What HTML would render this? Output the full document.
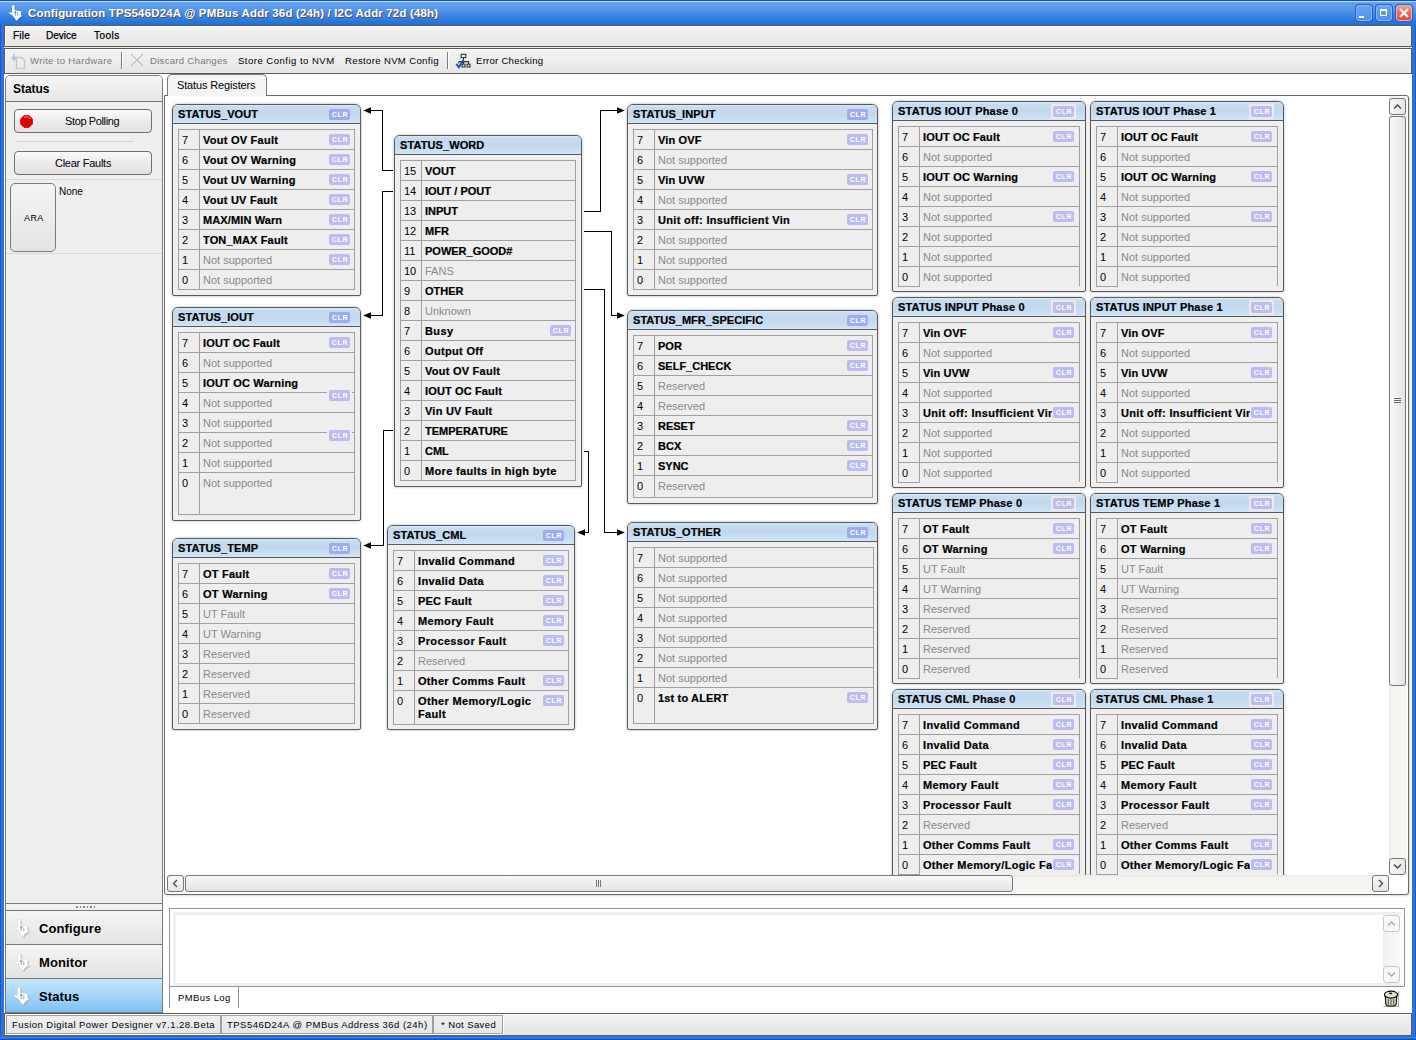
<!DOCTYPE html><html><head><meta charset="utf-8"><title>Configuration</title><style>
*{box-sizing:border-box;margin:0;padding:0}
html,body{width:1416px;height:1040px;overflow:hidden;background:#fff;font-family:"Liberation Sans", sans-serif;}
body div{position:absolute}
.t{white-space:nowrap;font-size:11px;line-height:13px;color:#000}
.pn{border:1px solid #5a5a5a;border-radius:6px 6px 2px 2px;background:#efefef;box-shadow:0 0 3px rgba(0,0,0,0.3)}
.ph{left:0;top:0;height:19px;border-bottom:1px solid #5a5a5a;border-radius:5px 5px 0 0;background:linear-gradient(#d6ebfb 0px,#c7dcf0 2px,#c2d8ed 9px,#cde2f3 17px,#d6ebfb 18px)}
.pt{white-space:nowrap;font-size:11px;font-weight:bold;line-height:13px;letter-spacing:0.25px;color:#000;-webkit-text-stroke:0.2px #000}
.tb{border:1px solid #a0a0a0;background:#eeeeee}
.hl{height:1px;background:#a0a0a0}
.vl{width:1px;background:#a0a0a0}
.num{left:3px;width:16px;height:20px;font-size:11px;line-height:21px;color:#000;white-space:nowrap}
.lb{left:24px;height:20px;font-size:11px;line-height:21px;font-weight:bold;letter-spacing:0.3px;color:#000;white-space:nowrap;overflow:hidden;-webkit-text-stroke:0.2px #000}
.lg{left:24px;height:20px;font-size:11px;line-height:21px;color:#8a8a8a;white-space:nowrap;overflow:hidden}
.clr{width:21px;height:11px;border-radius:2px;background:#bcbcf0;color:#fff;font-size:7px;line-height:11px;text-align:center;letter-spacing:0.75px;padding-left:1px;font-weight:bold}
.hclr{background:#9cacef}
.pclr{background:#bcbcf0}
.hbox{width:25px;height:15px;background:#eeebe6}
.cl{background:#000}
</style></head><body>
<div style="left:0px;top:0px;width:1416px;height:25px;background:linear-gradient(#0b53b8 0px,#0b53b8 1px,#bcd9fa 1px,#bcd9fa 2px,#6aa5ee 2px,#62a0ec 3px,#5a9aea 8px,#4a8ee6 12px,#3280e0 18px,#2677db 22px,#2070d8 25px)"></div>
<svg style="position:absolute;left:8px;top:5px" width="16" height="17" viewBox="0 0 18 19"><path d="M4.5 0.5H7.5V5.5L10 6.3L12.5 6.6L14.8 7.2V11.2L15.8 12.3L13 14.2L10.8 16.2V17.8L8.8 16.8L6.8 13.6L4.8 11.4L2.6 10.4L0.6 8.3H4.5Z" transform="translate(1,1)" fill="#1b4fa8" opacity="0.6"/><path d="M4.5 0.5H7.5V5.5L10 6.3L12.5 6.6L14.8 7.2V11.2L15.8 12.3L13 14.2L10.8 16.2V17.8L8.8 16.8L6.8 13.6L4.8 11.4L2.6 10.4L0.6 8.3H4.5Z" fill="#fff"/><path d="M8.2 6.5v5.5M6.8 8h3M10.8 8.5v3.5" stroke="#4a88e0" stroke-width="1" fill="none"/></svg>
<div class="t" style="left:28px;top:6px;font-size:11.5px;font-weight:bold;letter-spacing:0.154px;color:#fff;line-height:14px;text-shadow:1px 1px 0 #5a4a3a">Configuration TPS546D24A @ PMBus Addr 36d (24h) / I2C Addr 72d (48h)</div>
<div style="left:1356px;top:5px;width:16px;height:16px;border-radius:3px;border:1px solid #8ab6f2;background:linear-gradient(#6aa6f0,#4f90e8);box-shadow:0 0 0 1px #2060d0"></div>
<div style="left:1376px;top:5px;width:16px;height:16px;border-radius:3px;border:1px solid #8ab6f2;background:linear-gradient(#6aa6f0,#4f90e8);box-shadow:0 0 0 1px #2060d0"></div>
<div style="left:1359px;top:16px;width:5px;height:2px;background:#fff"></div>
<div style="left:1380px;top:9px;width:7px;height:7px;border:1px solid #fff;border-top-width:2px"></div>
<div style="left:1396px;top:5px;width:16px;height:16px;border-radius:3px;border:1px solid #f4b0a4;background:linear-gradient(#f49a8c,#ec6858 50%,#e4463a);box-shadow:0 0 0 1px #2060d0"></div>
<svg style="position:absolute;left:1399px;top:8px" width="10" height="10" viewBox="0 0 10 10"><path d="M1 1L9 9M9 1L1 9" stroke="#fff" stroke-width="2.2"/></svg>
<div style="left:0px;top:25px;width:4px;height:1015px;background:linear-gradient(90deg,#0b3fa8 0px,#2f74dc 1px,#2a6fdb 4px)"></div>
<div style="left:1412px;top:25px;width:4px;height:1015px;background:linear-gradient(90deg,#2a6fdb 0px,#2f74dc 3px,#0b3fa8 4px)"></div>
<div style="left:0px;top:1036px;width:1416px;height:4px;background:linear-gradient(#1f6ad8,#3a84e6 2px,#1a5cc8 3px,#0b3fa8 4px)"></div>
<div style="left:4px;top:25px;width:1408px;height:1010px;background:#efeadc"></div>
<div style="left:4px;top:25px;width:1408px;height:22px;background:linear-gradient(#f4f4f4,#e6e6e6);border:1px solid #5f5b52;box-shadow:inset 1px 1px 0 #fff"></div>
<div class="t" style="left:13px;top:29px;font-size:10px;letter-spacing:0.197px;line-height:13px;-webkit-text-stroke:0.25px #000">File</div>
<div class="t" style="left:46px;top:29px;font-size:10px;letter-spacing:-0.013px;line-height:13px;-webkit-text-stroke:0.25px #000">Device</div>
<div class="t" style="left:94px;top:29px;font-size:10px;letter-spacing:0.489px;line-height:13px;-webkit-text-stroke:0.25px #000">Tools</div>
<div style="left:4px;top:48px;width:1408px;height:26px;background:linear-gradient(#f4f4f4,#e6e6e6);border:1px solid #5f5b52;box-shadow:inset 1px 1px 0 #fff"></div>
<svg style="position:absolute;left:11px;top:53px" width="16" height="16" viewBox="0 0 16 16"><path d="M5.5 4.5h5l3 3v8h-8z" fill="none" stroke="#c8c8c8" stroke-width="1.5"/><path d="M3 1v5M1 4l2 3 2-3" stroke="#a8c8e8" stroke-width="1.6" fill="none"/></svg>
<div class="t" style="left:30px;top:54px;font-size:9.6px;letter-spacing:0.308px;color:#7a7a7a">Write to Hardware</div>
<div style="left:121px;top:52px;width:1px;height:17px;background:#808080;border-right:1px solid #fff;width:2px"></div>
<svg style="position:absolute;left:130px;top:53px" width="14" height="14" viewBox="0 0 14 14"><path d="M1 1L13 13M13 1L1 13" stroke="#c4c4c4" stroke-width="1.4"/></svg>
<div class="t" style="left:150px;top:54px;font-size:9.6px;letter-spacing:0.270px;color:#7a7a7a">Discard Changes</div>
<div class="t" style="left:238px;top:54px;font-size:9.6px;letter-spacing:0.458px;color:#000">Store Config to NVM</div>
<div class="t" style="left:345px;top:54px;font-size:9.6px;letter-spacing:0.328px;color:#000">Restore NVM Config</div>
<div style="left:447px;top:52px;width:2px;height:17px;background:#808080;border-right:1px solid #fff"></div>
<svg style="position:absolute;left:455px;top:53px" width="16" height="16" viewBox="0 0 16 16"><rect x="6.2" y="1.3" width="4.6" height="3.3" fill="none" stroke="#333" stroke-width="1.1"/><path d="M8.5 4.6V7.5M3.8 8.6H13.6M3.8 8.6V10.5M8.5 8.6V11M13.6 8.6V11" stroke="#333" stroke-width="1.1" fill="none"/><rect x="7" y="11.2" width="3" height="2.8" fill="none" stroke="#333" stroke-width="1.1"/><rect x="12.1" y="11.2" width="3" height="2.8" fill="none" stroke="#333" stroke-width="1.1"/><path d="M1.3 10.8L3.9 14.2L8.3 7.3" stroke="#1a56b4" stroke-width="2" fill="none"/></svg>
<div class="t" style="left:476px;top:54px;font-size:9.6px;letter-spacing:0.237px;color:#000">Error Checking</div>
<div style="left:4px;top:74px;width:1408px;height:961px;background:#fff"></div>
<div style="left:5px;top:75px;width:158px;height:829px;background:#efefef;border:1px solid #7a7a7a;border-radius:5px 5px 0 0"></div>
<div style="left:6px;top:76px;width:156px;height:26px;background:linear-gradient(#f6f6f6,#e6e6e6);border-bottom:1px solid #7a7a7a;border-radius:4px 4px 0 0"></div>
<div class="t" style="left:13px;top:82px;font-size:12px;font-weight:bold;letter-spacing:-0.054px;line-height:14px">Status</div>
<div style="left:14px;top:109px;width:138px;height:24px;border:1px solid #707070;border-radius:4px;background:linear-gradient(#fafafa,#ececec 50%,#e2e2e2)"></div>
<svg style="position:absolute;left:20px;top:115px" width="13" height="13" viewBox="0 0 13 13"><path d="M4 0.5h5l3.5 3.5v5l-3.5 3.5h-5l-3.5-3.5v-5z" fill="#e00000" stroke="#900" stroke-width="0.6"/><path d="M4 2h4l2 2" stroke="#ff8080" stroke-width="1" fill="none"/></svg>
<div class="t" style="left:65px;top:115px;font-size:11px;letter-spacing:-0.377px;">Stop Polling</div>
<div style="left:16px;top:141px;width:118px;height:1px;background:#d4d4d4"></div>
<div style="left:14px;top:151px;width:138px;height:24px;border:1px solid #707070;border-radius:4px;background:linear-gradient(#fafafa,#ececec 50%,#e2e2e2)"></div>
<div class="t" style="left:55px;top:157px;font-size:11px;letter-spacing:-0.265px;">Clear Faults</div>
<div style="left:6px;top:179px;width:156px;height:1px;background:#d8d8d8"></div>
<div style="left:10px;top:183px;width:46px;height:69px;border:1px solid #7a7a7a;border-radius:5px;background:linear-gradient(#f4f4f4,#e4e4e4)"></div>
<div class="t" style="left:24px;top:212px;font-size:9px;letter-spacing:0.400px;line-height:12px">ARA</div>
<div class="t" style="left:59px;top:186px;font-size:10px;letter-spacing:-0.069px;line-height:12px">None</div>
<div style="left:6px;top:253px;width:156px;height:1px;background:#d8d8d8"></div>
<div style="left:5px;top:903px;width:158px;height:8px;background:linear-gradient(#f4f2ea,#eeeeee);border:1px solid #7a7a7a"></div>
<div style="left:76.0px;top:906px;width:1.5px;height:1.5px;background:#8a8a8a"></div>
<div style="left:79.5px;top:906px;width:1.5px;height:1.5px;background:#8a8a8a"></div>
<div style="left:83.0px;top:906px;width:1.5px;height:1.5px;background:#8a8a8a"></div>
<div style="left:86.5px;top:906px;width:1.5px;height:1.5px;background:#8a8a8a"></div>
<div style="left:90.0px;top:906px;width:1.5px;height:1.5px;background:#8a8a8a"></div>
<div style="left:93.5px;top:906px;width:1.5px;height:1.5px;background:#8a8a8a"></div>
<div style="left:5px;top:911px;width:158px;height:34px;background:linear-gradient(#f4f4f4,#e4e4e4);border-left:1px solid #7a7a7a;border-right:1px solid #7a7a7a;border-bottom:1px solid #7a7a7a"></div>
<svg style="position:absolute;left:13px;top:919px" width="18" height="19" viewBox="0 0 18 19"><path d="M4.5 0.5H7.5V5.5L10 6.3L12.5 6.6L14.8 7.2V11.2L15.8 12.3L13 14.2L10.8 16.2V17.8L8.8 16.8L6.8 13.6L4.8 11.4L2.6 10.4L0.6 8.3H4.5Z" transform="translate(1.2,1.2)" fill="#9a9a9a" opacity="0.55"/><path d="M4.5 0.5H7.5V5.5L10 6.3L12.5 6.6L14.8 7.2V11.2L15.8 12.3L13 14.2L10.8 16.2V17.8L8.8 16.8L6.8 13.6L4.8 11.4L2.6 10.4L0.6 8.3H4.5Z" fill="#fff" stroke="#d0d0d0" stroke-width="0.5"/><path d="M8.2 6.5v5.5M6.8 8h3M10.8 8.5v3.5" stroke="#8a8f96" stroke-width="0.9" fill="none"/></svg>
<div class="t" style="left:39px;top:921px;font-size:13px;font-weight:bold;line-height:15px;letter-spacing:0.1px">Configure</div>
<div style="left:5px;top:945px;width:158px;height:34px;background:linear-gradient(#f4f4f4,#e4e4e4);border-left:1px solid #7a7a7a;border-right:1px solid #7a7a7a;border-bottom:1px solid #7a7a7a"></div>
<svg style="position:absolute;left:13px;top:953px" width="18" height="19" viewBox="0 0 18 19"><path d="M4.5 0.5H7.5V5.5L10 6.3L12.5 6.6L14.8 7.2V11.2L15.8 12.3L13 14.2L10.8 16.2V17.8L8.8 16.8L6.8 13.6L4.8 11.4L2.6 10.4L0.6 8.3H4.5Z" transform="translate(1.2,1.2)" fill="#9a9a9a" opacity="0.55"/><path d="M4.5 0.5H7.5V5.5L10 6.3L12.5 6.6L14.8 7.2V11.2L15.8 12.3L13 14.2L10.8 16.2V17.8L8.8 16.8L6.8 13.6L4.8 11.4L2.6 10.4L0.6 8.3H4.5Z" fill="#fff" stroke="#d0d0d0" stroke-width="0.5"/><path d="M8.2 6.5v5.5M6.8 8h3M10.8 8.5v3.5" stroke="#8a8f96" stroke-width="0.9" fill="none"/></svg>
<div class="t" style="left:39px;top:955px;font-size:13px;font-weight:bold;line-height:15px;letter-spacing:0.1px">Monitor</div>
<div style="left:5px;top:979px;width:158px;height:34px;background:linear-gradient(#c4e6fb,#a5d5f8 50%,#7fc0f4);border-left:1px solid #7a7a7a;border-right:1px solid #7a7a7a;border-bottom:1px solid #7a7a7a"></div>
<svg style="position:absolute;left:13px;top:987px" width="18" height="19" viewBox="0 0 18 19"><path d="M4.5 0.5H7.5V5.5L10 6.3L12.5 6.6L14.8 7.2V11.2L15.8 12.3L13 14.2L10.8 16.2V17.8L8.8 16.8L6.8 13.6L4.8 11.4L2.6 10.4L0.6 8.3H4.5Z" transform="translate(1.2,1.2)" fill="#9a9a9a" opacity="0.55"/><path d="M4.5 0.5H7.5V5.5L10 6.3L12.5 6.6L14.8 7.2V11.2L15.8 12.3L13 14.2L10.8 16.2V17.8L8.8 16.8L6.8 13.6L4.8 11.4L2.6 10.4L0.6 8.3H4.5Z" fill="#fff" stroke="#d0d0d0" stroke-width="0.5"/><path d="M8.2 6.5v5.5M6.8 8h3M10.8 8.5v3.5" stroke="#8a8f96" stroke-width="0.9" fill="none"/></svg>
<div class="t" style="left:39px;top:989px;font-size:13px;font-weight:bold;line-height:15px;letter-spacing:0.1px">Status</div>
<div style="left:167px;top:74px;width:100px;height:22px;background:#f4f4f4;border:1px solid #7a7a7a;border-bottom:none;border-radius:5px 5px 0 0"></div>
<div class="t" style="left:177px;top:79px;font-size:11px;letter-spacing:-0.143px;">Status Registers</div>
<div style="left:266px;top:95px;width:1140px;height:1px;background:#6a6a6a"></div>
<div style="left:164px;top:95px;width:1245px;height:800px;border:1px solid #6a6a6a;border-radius:0 3px 3px 3px;background:#fff;box-shadow:1px 1px 2px rgba(0,0,0,0.15)"></div>
<div style="left:168px;top:94px;width:98px;height:2px;background:#f4f4f4"></div>
<div style="left:166px;top:96px;width:1223px;height:779px;overflow:hidden;background:#fff">
<div class="pn" style="left:6px;top:8px;width:189px;height:192px">
<div class="ph" style="width:187px"></div>
<div class="pt" style="left:5px;top:3px;letter-spacing:0.100px">STATUS_VOUT</div>
<div class="clr hclr" style="left:156px;top:4px">CLR</div>
<div class="tb" style="left:5px;top:24px;width:177px;height:161px;">
<div class="num" style="top:0px">7</div>
<div class="lb" style="top:0px;width:124px;letter-spacing:0.245px;">Vout OV Fault</div>
<div class="clr" style="left:150px;top:4px">CLR</div>
<div class="hl" style="left:0;top:19px;width:175px"></div>
<div class="num" style="top:20px">6</div>
<div class="lb" style="top:20px;width:124px;letter-spacing:0.270px;">Vout OV Warning</div>
<div class="clr" style="left:150px;top:24px">CLR</div>
<div class="hl" style="left:0;top:39px;width:175px"></div>
<div class="num" style="top:40px">5</div>
<div class="lb" style="top:40px;width:124px;letter-spacing:0.270px;">Vout UV Warning</div>
<div class="clr" style="left:150px;top:44px">CLR</div>
<div class="hl" style="left:0;top:59px;width:175px"></div>
<div class="num" style="top:60px">4</div>
<div class="lb" style="top:60px;width:124px;letter-spacing:0.245px;">Vout UV Fault</div>
<div class="clr" style="left:150px;top:64px">CLR</div>
<div class="hl" style="left:0;top:79px;width:175px"></div>
<div class="num" style="top:80px">3</div>
<div class="lb" style="top:80px;width:124px;letter-spacing:0.115px;">MAX/MIN Warn</div>
<div class="clr" style="left:150px;top:84px">CLR</div>
<div class="hl" style="left:0;top:99px;width:175px"></div>
<div class="num" style="top:100px">2</div>
<div class="lb" style="top:100px;width:124px;letter-spacing:0.140px;">TON_MAX Fault</div>
<div class="clr" style="left:150px;top:104px">CLR</div>
<div class="hl" style="left:0;top:119px;width:175px"></div>
<div class="num" style="top:120px">1</div>
<div class="lg" style="top:120px;width:124px;">Not supported</div>
<div class="clr" style="left:150px;top:124px">CLR</div>
<div class="hl" style="left:0;top:139px;width:175px"></div>
<div class="num" style="top:140px">0</div>
<div class="lg" style="top:140px;width:150px;">Not supported</div>
<div class="vl" style="left:20px;top:0;height:159px"></div>
</div>
</div>
<div class="pn" style="left:6px;top:211px;width:189px;height:214px">
<div class="ph" style="width:187px"></div>
<div class="pt" style="left:5px;top:3px;letter-spacing:0.100px">STATUS_IOUT</div>
<div class="clr hclr" style="left:156px;top:4px">CLR</div>
<div class="tb" style="left:5px;top:24px;width:177px;height:183px;">
<div class="num" style="top:0px">7</div>
<div class="lb" style="top:0px;width:124px;letter-spacing:0.140px;">IOUT OC Fault</div>
<div class="clr" style="left:150px;top:4px">CLR</div>
<div class="hl" style="left:0;top:19px;width:175px"></div>
<div class="num" style="top:20px">6</div>
<div class="lg" style="top:20px;width:150px;">Not supported</div>
<div class="hl" style="left:0;top:39px;width:175px"></div>
<div class="num" style="top:40px">5</div>
<div class="lb" style="top:40px;width:150px;letter-spacing:0.180px;">IOUT OC Warning</div>
<div class="hl" style="left:0;top:59px;width:175px"></div>
<div class="num" style="top:60px">4</div>
<div class="lg" style="top:60px;width:150px;">Not supported</div>
<div class="hl" style="left:0;top:79px;width:175px"></div>
<div class="num" style="top:80px">3</div>
<div class="lg" style="top:80px;width:150px;">Not supported</div>
<div class="hl" style="left:0;top:99px;width:175px"></div>
<div class="num" style="top:100px">2</div>
<div class="lg" style="top:100px;width:150px;">Not supported</div>
<div class="hl" style="left:0;top:119px;width:175px"></div>
<div class="num" style="top:120px">1</div>
<div class="lg" style="top:120px;width:150px;">Not supported</div>
<div class="hl" style="left:0;top:139px;width:175px"></div>
<div class="num" style="top:140px">0</div>
<div class="lg" style="top:140px;width:150px;">Not supported</div>
<div class="vl" style="left:20px;top:0;height:181px"></div>
<div style="position:absolute;left:148px;top:57px;width:25px;height:5px;background:#eeeeee"></div>
<div class="clr" style="left:150px;top:57px">CLR</div>
<div style="position:absolute;left:148px;top:97px;width:25px;height:5px;background:#eeeeee"></div>
<div class="clr" style="left:150px;top:97px">CLR</div>
</div>
</div>
<div class="pn" style="left:6px;top:442px;width:189px;height:192px">
<div class="ph" style="width:187px"></div>
<div class="pt" style="left:5px;top:3px;letter-spacing:0.100px">STATUS_TEMP</div>
<div class="clr hclr" style="left:156px;top:4px">CLR</div>
<div class="tb" style="left:5px;top:24px;width:177px;height:161px;">
<div class="num" style="top:0px">7</div>
<div class="lb" style="top:0px;width:124px;letter-spacing:0.240px;">OT Fault</div>
<div class="clr" style="left:150px;top:4px">CLR</div>
<div class="hl" style="left:0;top:19px;width:175px"></div>
<div class="num" style="top:20px">6</div>
<div class="lb" style="top:20px;width:124px;letter-spacing:0.280px;">OT Warning</div>
<div class="clr" style="left:150px;top:24px">CLR</div>
<div class="hl" style="left:0;top:39px;width:175px"></div>
<div class="num" style="top:40px">5</div>
<div class="lg" style="top:40px;width:150px;">UT Fault</div>
<div class="hl" style="left:0;top:59px;width:175px"></div>
<div class="num" style="top:60px">4</div>
<div class="lg" style="top:60px;width:150px;">UT Warning</div>
<div class="hl" style="left:0;top:79px;width:175px"></div>
<div class="num" style="top:80px">3</div>
<div class="lg" style="top:80px;width:150px;">Reserved</div>
<div class="hl" style="left:0;top:99px;width:175px"></div>
<div class="num" style="top:100px">2</div>
<div class="lg" style="top:100px;width:150px;">Reserved</div>
<div class="hl" style="left:0;top:119px;width:175px"></div>
<div class="num" style="top:120px">1</div>
<div class="lg" style="top:120px;width:150px;">Reserved</div>
<div class="hl" style="left:0;top:139px;width:175px"></div>
<div class="num" style="top:140px">0</div>
<div class="lg" style="top:140px;width:150px;">Reserved</div>
<div class="vl" style="left:20px;top:0;height:159px"></div>
</div>
</div>
<div class="pn" style="left:228px;top:39px;width:188px;height:352px">
<div class="ph" style="width:186px"></div>
<div class="pt" style="left:5px;top:3px;letter-spacing:0.100px">STATUS_WORD</div>
<div class="tb" style="left:5px;top:24px;width:176px;height:321px;">
<div class="num" style="top:0px">15</div>
<div class="lb" style="top:0px;width:149px;letter-spacing:0.000px;">VOUT</div>
<div class="hl" style="left:0;top:19px;width:174px"></div>
<div class="num" style="top:20px">14</div>
<div class="lb" style="top:20px;width:149px;letter-spacing:0.000px;">IOUT / POUT</div>
<div class="hl" style="left:0;top:39px;width:174px"></div>
<div class="num" style="top:40px">13</div>
<div class="lb" style="top:40px;width:149px;letter-spacing:0.000px;">INPUT</div>
<div class="hl" style="left:0;top:59px;width:174px"></div>
<div class="num" style="top:60px">12</div>
<div class="lb" style="top:60px;width:149px;letter-spacing:0.000px;">MFR</div>
<div class="hl" style="left:0;top:79px;width:174px"></div>
<div class="num" style="top:80px">11</div>
<div class="lb" style="top:80px;width:149px;letter-spacing:0.000px;">POWER_GOOD#</div>
<div class="hl" style="left:0;top:99px;width:174px"></div>
<div class="num" style="top:100px">10</div>
<div class="lg" style="top:100px;width:149px;">FANS</div>
<div class="hl" style="left:0;top:119px;width:174px"></div>
<div class="num" style="top:120px">9</div>
<div class="lb" style="top:120px;width:149px;letter-spacing:0.000px;">OTHER</div>
<div class="hl" style="left:0;top:139px;width:174px"></div>
<div class="num" style="top:140px">8</div>
<div class="lg" style="top:140px;width:149px;">Unknown</div>
<div class="hl" style="left:0;top:159px;width:174px"></div>
<div class="num" style="top:160px">7</div>
<div class="lb" style="top:160px;width:123px;letter-spacing:0.420px;">Busy</div>
<div class="clr" style="left:149px;top:164px">CLR</div>
<div class="hl" style="left:0;top:179px;width:174px"></div>
<div class="num" style="top:180px">6</div>
<div class="lb" style="top:180px;width:149px;letter-spacing:0.327px;">Output Off</div>
<div class="hl" style="left:0;top:199px;width:174px"></div>
<div class="num" style="top:200px">5</div>
<div class="lb" style="top:200px;width:149px;letter-spacing:0.245px;">Vout OV Fault</div>
<div class="hl" style="left:0;top:219px;width:174px"></div>
<div class="num" style="top:220px">4</div>
<div class="lb" style="top:220px;width:149px;letter-spacing:0.140px;">IOUT OC Fault</div>
<div class="hl" style="left:0;top:239px;width:174px"></div>
<div class="num" style="top:240px">3</div>
<div class="lb" style="top:240px;width:149px;letter-spacing:0.229px;">Vin UV Fault</div>
<div class="hl" style="left:0;top:259px;width:174px"></div>
<div class="num" style="top:260px">2</div>
<div class="lb" style="top:260px;width:149px;letter-spacing:0.000px;">TEMPERATURE</div>
<div class="hl" style="left:0;top:279px;width:174px"></div>
<div class="num" style="top:280px">1</div>
<div class="lb" style="top:280px;width:149px;letter-spacing:0.000px;">CML</div>
<div class="hl" style="left:0;top:299px;width:174px"></div>
<div class="num" style="top:300px">0</div>
<div class="lb" style="top:300px;width:149px;letter-spacing:0.347px;">More faults in high byte</div>
<div class="vl" style="left:20px;top:0;height:319px"></div>
</div>
</div>
<div class="pn" style="left:221px;top:429px;width:188px;height:205px">
<div class="ph" style="width:186px"></div>
<div class="pt" style="left:5px;top:3px;letter-spacing:0.111px">STATUS_CML</div>
<div class="clr hclr" style="left:155px;top:4px">CLR</div>
<div class="tb" style="left:5px;top:24px;width:176px;height:175px;">
<div class="num" style="top:0px">7</div>
<div class="lb" style="top:0px;width:123px;letter-spacing:0.360px;">Invalid Command</div>
<div class="clr" style="left:149px;top:4px">CLR</div>
<div class="hl" style="left:0;top:19px;width:174px"></div>
<div class="num" style="top:20px">6</div>
<div class="lb" style="top:20px;width:123px;letter-spacing:0.344px;">Invalid Data</div>
<div class="clr" style="left:149px;top:24px">CLR</div>
<div class="hl" style="left:0;top:39px;width:174px"></div>
<div class="num" style="top:40px">5</div>
<div class="lb" style="top:40px;width:123px;letter-spacing:0.210px;">PEC Fault</div>
<div class="clr" style="left:149px;top:44px">CLR</div>
<div class="hl" style="left:0;top:59px;width:174px"></div>
<div class="num" style="top:60px">4</div>
<div class="lb" style="top:60px;width:123px;letter-spacing:0.344px;">Memory Fault</div>
<div class="clr" style="left:149px;top:64px">CLR</div>
<div class="hl" style="left:0;top:79px;width:174px"></div>
<div class="num" style="top:80px">3</div>
<div class="lb" style="top:80px;width:123px;letter-spacing:0.360px;">Processor Fault</div>
<div class="clr" style="left:149px;top:84px">CLR</div>
<div class="hl" style="left:0;top:99px;width:174px"></div>
<div class="num" style="top:100px">2</div>
<div class="lg" style="top:100px;width:149px;">Reserved</div>
<div class="hl" style="left:0;top:119px;width:174px"></div>
<div class="num" style="top:120px">1</div>
<div class="lb" style="top:120px;width:123px;letter-spacing:0.315px;">Other Comms Fault</div>
<div class="clr" style="left:149px;top:124px">CLR</div>
<div class="hl" style="left:0;top:139px;width:174px"></div>
<div class="num" style="top:140px">0</div>
<div class="lb" style="top:144px;width:149px;height:auto;line-height:13px;white-space:normal;letter-spacing:0.35px">Other Memory/Logic<br>Fault</div>
<div class="clr" style="left:149px;top:144px">CLR</div>
<div class="vl" style="left:20px;top:0;height:173px"></div>
</div>
</div>
<div class="pn" style="left:461px;top:8px;width:251px;height:192px">
<div class="ph" style="width:249px"></div>
<div class="pt" style="left:5px;top:3px;letter-spacing:0.091px">STATUS_INPUT</div>
<div class="clr hclr" style="left:219px;top:4px">CLR</div>
<div class="tb" style="left:5px;top:24px;width:240px;height:161px;">
<div class="num" style="top:0px">7</div>
<div class="lb" style="top:0px;width:187px;letter-spacing:0.140px;">Vin OVF</div>
<div class="clr" style="left:213px;top:4px">CLR</div>
<div class="hl" style="left:0;top:19px;width:238px"></div>
<div class="num" style="top:20px">6</div>
<div class="lg" style="top:20px;width:213px;">Not supported</div>
<div class="hl" style="left:0;top:39px;width:238px"></div>
<div class="num" style="top:40px">5</div>
<div class="lb" style="top:40px;width:187px;letter-spacing:0.140px;">Vin UVW</div>
<div class="clr" style="left:213px;top:44px">CLR</div>
<div class="hl" style="left:0;top:59px;width:238px"></div>
<div class="num" style="top:60px">4</div>
<div class="lg" style="top:60px;width:213px;">Not supported</div>
<div class="hl" style="left:0;top:79px;width:238px"></div>
<div class="num" style="top:80px">3</div>
<div class="lb" style="top:80px;width:187px;letter-spacing:0.319px;">Unit off: Insufficient Vin</div>
<div class="clr" style="left:213px;top:84px">CLR</div>
<div class="hl" style="left:0;top:99px;width:238px"></div>
<div class="num" style="top:100px">2</div>
<div class="lg" style="top:100px;width:213px;">Not supported</div>
<div class="hl" style="left:0;top:119px;width:238px"></div>
<div class="num" style="top:120px">1</div>
<div class="lg" style="top:120px;width:213px;">Not supported</div>
<div class="hl" style="left:0;top:139px;width:238px"></div>
<div class="num" style="top:140px">0</div>
<div class="lg" style="top:140px;width:213px;">Not supported</div>
<div class="vl" style="left:20px;top:0;height:159px"></div>
</div>
</div>
<div class="pn" style="left:461px;top:214px;width:251px;height:194px">
<div class="ph" style="width:249px"></div>
<div class="pt" style="left:5px;top:3px;letter-spacing:0.056px">STATUS_MFR_SPECIFIC</div>
<div class="clr hclr" style="left:219px;top:4px">CLR</div>
<div class="tb" style="left:5px;top:24px;width:240px;height:163px;">
<div class="num" style="top:0px">7</div>
<div class="lb" style="top:0px;width:187px;letter-spacing:0.000px;">POR</div>
<div class="clr" style="left:213px;top:4px">CLR</div>
<div class="hl" style="left:0;top:19px;width:238px"></div>
<div class="num" style="top:20px">6</div>
<div class="lb" style="top:20px;width:187px;letter-spacing:0.000px;">SELF_CHECK</div>
<div class="clr" style="left:213px;top:24px">CLR</div>
<div class="hl" style="left:0;top:39px;width:238px"></div>
<div class="num" style="top:40px">5</div>
<div class="lg" style="top:40px;width:213px;">Reserved</div>
<div class="hl" style="left:0;top:59px;width:238px"></div>
<div class="num" style="top:60px">4</div>
<div class="lg" style="top:60px;width:213px;">Reserved</div>
<div class="hl" style="left:0;top:79px;width:238px"></div>
<div class="num" style="top:80px">3</div>
<div class="lb" style="top:80px;width:187px;letter-spacing:0.000px;">RESET</div>
<div class="clr" style="left:213px;top:84px">CLR</div>
<div class="hl" style="left:0;top:99px;width:238px"></div>
<div class="num" style="top:100px">2</div>
<div class="lb" style="top:100px;width:187px;letter-spacing:0.000px;">BCX</div>
<div class="clr" style="left:213px;top:104px">CLR</div>
<div class="hl" style="left:0;top:119px;width:238px"></div>
<div class="num" style="top:120px">1</div>
<div class="lb" style="top:120px;width:187px;letter-spacing:0.000px;">SYNC</div>
<div class="clr" style="left:213px;top:124px">CLR</div>
<div class="hl" style="left:0;top:139px;width:238px"></div>
<div class="num" style="top:140px">0</div>
<div class="lg" style="top:140px;width:213px;">Reserved</div>
<div class="vl" style="left:20px;top:0;height:161px"></div>
</div>
</div>
<div class="pn" style="left:461px;top:426px;width:251px;height:208px">
<div class="ph" style="width:249px"></div>
<div class="pt" style="left:5px;top:3px;letter-spacing:0.091px">STATUS_OTHER</div>
<div class="clr hclr" style="left:219px;top:4px">CLR</div>
<div class="tb" style="left:5px;top:24px;width:241px;height:177px;">
<div class="num" style="top:0px">7</div>
<div class="lg" style="top:0px;width:214px;">Not supported</div>
<div class="hl" style="left:0;top:19px;width:239px"></div>
<div class="num" style="top:20px">6</div>
<div class="lg" style="top:20px;width:214px;">Not supported</div>
<div class="hl" style="left:0;top:39px;width:239px"></div>
<div class="num" style="top:40px">5</div>
<div class="lg" style="top:40px;width:214px;">Not supported</div>
<div class="hl" style="left:0;top:59px;width:239px"></div>
<div class="num" style="top:60px">4</div>
<div class="lg" style="top:60px;width:214px;">Not supported</div>
<div class="hl" style="left:0;top:79px;width:239px"></div>
<div class="num" style="top:80px">3</div>
<div class="lg" style="top:80px;width:214px;">Not supported</div>
<div class="hl" style="left:0;top:99px;width:239px"></div>
<div class="num" style="top:100px">2</div>
<div class="lg" style="top:100px;width:214px;">Not supported</div>
<div class="hl" style="left:0;top:119px;width:239px"></div>
<div class="num" style="top:120px">1</div>
<div class="lg" style="top:120px;width:214px;">Not supported</div>
<div class="hl" style="left:0;top:139px;width:239px"></div>
<div class="num" style="top:140px">0</div>
<div class="lb" style="top:140px;width:188px;letter-spacing:0.153px;">1st to ALERT</div>
<div class="clr" style="left:213px;top:144px">CLR</div>
<div class="vl" style="left:20px;top:0;height:175px"></div>
</div>
</div>
<div class="pn" style="left:726px;top:5px;width:194px;height:191px">
<div class="ph" style="width:192px"></div>
<div class="pt" style="left:5px;top:3px;letter-spacing:0.199px">STATUS IOUT Phase 0</div>
<div class="hbox" style="left:158px;top:2px"></div>
<div class="clr pclr" style="left:160px;top:4px">CLR</div>
<div class="tb" style="left:5px;top:24px;width:182px;height:160px;border-bottom:none;">
<div class="num" style="top:0px">7</div>
<div class="lb" style="top:0px;width:129px;letter-spacing:0.140px;">IOUT OC Fault</div>
<div class="clr" style="left:154px;top:4px">CLR</div>
<div class="hl" style="left:0;top:19px;width:180px"></div>
<div class="num" style="top:20px">6</div>
<div class="lg" style="top:20px;width:155px;">Not supported</div>
<div class="hl" style="left:0;top:39px;width:180px"></div>
<div class="num" style="top:40px">5</div>
<div class="lb" style="top:40px;width:129px;letter-spacing:0.180px;">IOUT OC Warning</div>
<div class="clr" style="left:154px;top:44px">CLR</div>
<div class="hl" style="left:0;top:59px;width:180px"></div>
<div class="num" style="top:60px">4</div>
<div class="lg" style="top:60px;width:155px;">Not supported</div>
<div class="hl" style="left:0;top:79px;width:180px"></div>
<div class="num" style="top:80px">3</div>
<div class="lg" style="top:80px;width:129px;">Not supported</div>
<div class="clr" style="left:154px;top:84px">CLR</div>
<div class="hl" style="left:0;top:99px;width:180px"></div>
<div class="num" style="top:100px">2</div>
<div class="lg" style="top:100px;width:155px;">Not supported</div>
<div class="hl" style="left:0;top:119px;width:180px"></div>
<div class="num" style="top:120px">1</div>
<div class="lg" style="top:120px;width:155px;">Not supported</div>
<div class="hl" style="left:0;top:139px;width:180px"></div>
<div class="num" style="top:140px">0</div>
<div class="lg" style="top:140px;width:155px;">Not supported</div>
<div class="vl" style="left:20px;top:0;height:160px"></div>
<div style="position:absolute;left:-1px;top:159px;width:22px;height:1px;background:#a0a0a0"></div>
</div>
</div>
<div class="pn" style="left:726px;top:201px;width:194px;height:191px">
<div class="ph" style="width:192px"></div>
<div class="pt" style="left:5px;top:3px;letter-spacing:0.188px">STATUS INPUT Phase 0</div>
<div class="hbox" style="left:158px;top:2px"></div>
<div class="clr pclr" style="left:160px;top:4px">CLR</div>
<div class="tb" style="left:5px;top:24px;width:182px;height:160px;border-bottom:none;">
<div class="num" style="top:0px">7</div>
<div class="lb" style="top:0px;width:129px;letter-spacing:0.140px;">Vin OVF</div>
<div class="clr" style="left:154px;top:4px">CLR</div>
<div class="hl" style="left:0;top:19px;width:180px"></div>
<div class="num" style="top:20px">6</div>
<div class="lg" style="top:20px;width:155px;">Not supported</div>
<div class="hl" style="left:0;top:39px;width:180px"></div>
<div class="num" style="top:40px">5</div>
<div class="lb" style="top:40px;width:129px;letter-spacing:0.140px;">Vin UVW</div>
<div class="clr" style="left:154px;top:44px">CLR</div>
<div class="hl" style="left:0;top:59px;width:180px"></div>
<div class="num" style="top:60px">4</div>
<div class="lg" style="top:60px;width:155px;">Not supported</div>
<div class="hl" style="left:0;top:79px;width:180px"></div>
<div class="num" style="top:80px">3</div>
<div class="lb" style="top:80px;width:129px;letter-spacing:0.319px;">Unit off: Insufficient Vin</div>
<div class="clr" style="left:154px;top:84px">CLR</div>
<div class="hl" style="left:0;top:99px;width:180px"></div>
<div class="num" style="top:100px">2</div>
<div class="lg" style="top:100px;width:155px;">Not supported</div>
<div class="hl" style="left:0;top:119px;width:180px"></div>
<div class="num" style="top:120px">1</div>
<div class="lg" style="top:120px;width:155px;">Not supported</div>
<div class="hl" style="left:0;top:139px;width:180px"></div>
<div class="num" style="top:140px">0</div>
<div class="lg" style="top:140px;width:155px;">Not supported</div>
<div class="vl" style="left:20px;top:0;height:160px"></div>
<div style="position:absolute;left:-1px;top:159px;width:22px;height:1px;background:#a0a0a0"></div>
</div>
</div>
<div class="pn" style="left:726px;top:397px;width:194px;height:191px">
<div class="ph" style="width:192px"></div>
<div class="pt" style="left:5px;top:3px;letter-spacing:0.199px">STATUS TEMP Phase 0</div>
<div class="hbox" style="left:158px;top:2px"></div>
<div class="clr pclr" style="left:160px;top:4px">CLR</div>
<div class="tb" style="left:5px;top:24px;width:182px;height:160px;border-bottom:none;">
<div class="num" style="top:0px">7</div>
<div class="lb" style="top:0px;width:129px;letter-spacing:0.240px;">OT Fault</div>
<div class="clr" style="left:154px;top:4px">CLR</div>
<div class="hl" style="left:0;top:19px;width:180px"></div>
<div class="num" style="top:20px">6</div>
<div class="lb" style="top:20px;width:129px;letter-spacing:0.280px;">OT Warning</div>
<div class="clr" style="left:154px;top:24px">CLR</div>
<div class="hl" style="left:0;top:39px;width:180px"></div>
<div class="num" style="top:40px">5</div>
<div class="lg" style="top:40px;width:155px;">UT Fault</div>
<div class="hl" style="left:0;top:59px;width:180px"></div>
<div class="num" style="top:60px">4</div>
<div class="lg" style="top:60px;width:155px;">UT Warning</div>
<div class="hl" style="left:0;top:79px;width:180px"></div>
<div class="num" style="top:80px">3</div>
<div class="lg" style="top:80px;width:155px;">Reserved</div>
<div class="hl" style="left:0;top:99px;width:180px"></div>
<div class="num" style="top:100px">2</div>
<div class="lg" style="top:100px;width:155px;">Reserved</div>
<div class="hl" style="left:0;top:119px;width:180px"></div>
<div class="num" style="top:120px">1</div>
<div class="lg" style="top:120px;width:155px;">Reserved</div>
<div class="hl" style="left:0;top:139px;width:180px"></div>
<div class="num" style="top:140px">0</div>
<div class="lg" style="top:140px;width:155px;">Reserved</div>
<div class="vl" style="left:20px;top:0;height:160px"></div>
<div style="position:absolute;left:-1px;top:159px;width:22px;height:1px;background:#a0a0a0"></div>
</div>
</div>
<div class="pn" style="left:726px;top:593px;width:194px;height:191px">
<div class="ph" style="width:192px"></div>
<div class="pt" style="left:5px;top:3px;letter-spacing:0.211px">STATUS CML Phase 0</div>
<div class="hbox" style="left:158px;top:2px"></div>
<div class="clr pclr" style="left:160px;top:4px">CLR</div>
<div class="tb" style="left:5px;top:24px;width:182px;height:160px;border-bottom:none;">
<div class="num" style="top:0px">7</div>
<div class="lb" style="top:0px;width:129px;letter-spacing:0.360px;">Invalid Command</div>
<div class="clr" style="left:154px;top:4px">CLR</div>
<div class="hl" style="left:0;top:19px;width:180px"></div>
<div class="num" style="top:20px">6</div>
<div class="lb" style="top:20px;width:129px;letter-spacing:0.344px;">Invalid Data</div>
<div class="clr" style="left:154px;top:24px">CLR</div>
<div class="hl" style="left:0;top:39px;width:180px"></div>
<div class="num" style="top:40px">5</div>
<div class="lb" style="top:40px;width:129px;letter-spacing:0.210px;">PEC Fault</div>
<div class="clr" style="left:154px;top:44px">CLR</div>
<div class="hl" style="left:0;top:59px;width:180px"></div>
<div class="num" style="top:60px">4</div>
<div class="lb" style="top:60px;width:129px;letter-spacing:0.344px;">Memory Fault</div>
<div class="clr" style="left:154px;top:64px">CLR</div>
<div class="hl" style="left:0;top:79px;width:180px"></div>
<div class="num" style="top:80px">3</div>
<div class="lb" style="top:80px;width:129px;letter-spacing:0.360px;">Processor Fault</div>
<div class="clr" style="left:154px;top:84px">CLR</div>
<div class="hl" style="left:0;top:99px;width:180px"></div>
<div class="num" style="top:100px">2</div>
<div class="lg" style="top:100px;width:155px;">Reserved</div>
<div class="hl" style="left:0;top:119px;width:180px"></div>
<div class="num" style="top:120px">1</div>
<div class="lb" style="top:120px;width:129px;letter-spacing:0.315px;">Other Comms Fault</div>
<div class="clr" style="left:154px;top:124px">CLR</div>
<div class="hl" style="left:0;top:139px;width:180px"></div>
<div class="num" style="top:140px">0</div>
<div class="lb" style="top:140px;width:129px;letter-spacing:0.310px;">Other Memory/Logic Fault</div>
<div class="clr" style="left:154px;top:144px">CLR</div>
<div class="vl" style="left:20px;top:0;height:160px"></div>
<div style="position:absolute;left:-1px;top:159px;width:22px;height:1px;background:#a0a0a0"></div>
</div>
</div>
<div class="pn" style="left:924px;top:5px;width:194px;height:191px">
<div class="ph" style="width:192px"></div>
<div class="pt" style="left:5px;top:3px;letter-spacing:0.199px">STATUS IOUT Phase 1</div>
<div class="hbox" style="left:158px;top:2px"></div>
<div class="clr pclr" style="left:160px;top:4px">CLR</div>
<div class="tb" style="left:5px;top:24px;width:182px;height:160px;border-bottom:none;">
<div class="num" style="top:0px">7</div>
<div class="lb" style="top:0px;width:129px;letter-spacing:0.140px;">IOUT OC Fault</div>
<div class="clr" style="left:154px;top:4px">CLR</div>
<div class="hl" style="left:0;top:19px;width:180px"></div>
<div class="num" style="top:20px">6</div>
<div class="lg" style="top:20px;width:155px;">Not supported</div>
<div class="hl" style="left:0;top:39px;width:180px"></div>
<div class="num" style="top:40px">5</div>
<div class="lb" style="top:40px;width:129px;letter-spacing:0.180px;">IOUT OC Warning</div>
<div class="clr" style="left:154px;top:44px">CLR</div>
<div class="hl" style="left:0;top:59px;width:180px"></div>
<div class="num" style="top:60px">4</div>
<div class="lg" style="top:60px;width:155px;">Not supported</div>
<div class="hl" style="left:0;top:79px;width:180px"></div>
<div class="num" style="top:80px">3</div>
<div class="lg" style="top:80px;width:129px;">Not supported</div>
<div class="clr" style="left:154px;top:84px">CLR</div>
<div class="hl" style="left:0;top:99px;width:180px"></div>
<div class="num" style="top:100px">2</div>
<div class="lg" style="top:100px;width:155px;">Not supported</div>
<div class="hl" style="left:0;top:119px;width:180px"></div>
<div class="num" style="top:120px">1</div>
<div class="lg" style="top:120px;width:155px;">Not supported</div>
<div class="hl" style="left:0;top:139px;width:180px"></div>
<div class="num" style="top:140px">0</div>
<div class="lg" style="top:140px;width:155px;">Not supported</div>
<div class="vl" style="left:20px;top:0;height:160px"></div>
<div style="position:absolute;left:-1px;top:159px;width:22px;height:1px;background:#a0a0a0"></div>
</div>
</div>
<div class="pn" style="left:924px;top:201px;width:194px;height:191px">
<div class="ph" style="width:192px"></div>
<div class="pt" style="left:5px;top:3px;letter-spacing:0.188px">STATUS INPUT Phase 1</div>
<div class="hbox" style="left:158px;top:2px"></div>
<div class="clr pclr" style="left:160px;top:4px">CLR</div>
<div class="tb" style="left:5px;top:24px;width:182px;height:160px;border-bottom:none;">
<div class="num" style="top:0px">7</div>
<div class="lb" style="top:0px;width:129px;letter-spacing:0.140px;">Vin OVF</div>
<div class="clr" style="left:154px;top:4px">CLR</div>
<div class="hl" style="left:0;top:19px;width:180px"></div>
<div class="num" style="top:20px">6</div>
<div class="lg" style="top:20px;width:155px;">Not supported</div>
<div class="hl" style="left:0;top:39px;width:180px"></div>
<div class="num" style="top:40px">5</div>
<div class="lb" style="top:40px;width:129px;letter-spacing:0.140px;">Vin UVW</div>
<div class="clr" style="left:154px;top:44px">CLR</div>
<div class="hl" style="left:0;top:59px;width:180px"></div>
<div class="num" style="top:60px">4</div>
<div class="lg" style="top:60px;width:155px;">Not supported</div>
<div class="hl" style="left:0;top:79px;width:180px"></div>
<div class="num" style="top:80px">3</div>
<div class="lb" style="top:80px;width:129px;letter-spacing:0.319px;">Unit off: Insufficient Vin</div>
<div class="clr" style="left:154px;top:84px">CLR</div>
<div class="hl" style="left:0;top:99px;width:180px"></div>
<div class="num" style="top:100px">2</div>
<div class="lg" style="top:100px;width:155px;">Not supported</div>
<div class="hl" style="left:0;top:119px;width:180px"></div>
<div class="num" style="top:120px">1</div>
<div class="lg" style="top:120px;width:155px;">Not supported</div>
<div class="hl" style="left:0;top:139px;width:180px"></div>
<div class="num" style="top:140px">0</div>
<div class="lg" style="top:140px;width:155px;">Not supported</div>
<div class="vl" style="left:20px;top:0;height:160px"></div>
<div style="position:absolute;left:-1px;top:159px;width:22px;height:1px;background:#a0a0a0"></div>
</div>
</div>
<div class="pn" style="left:924px;top:397px;width:194px;height:191px">
<div class="ph" style="width:192px"></div>
<div class="pt" style="left:5px;top:3px;letter-spacing:0.199px">STATUS TEMP Phase 1</div>
<div class="hbox" style="left:158px;top:2px"></div>
<div class="clr pclr" style="left:160px;top:4px">CLR</div>
<div class="tb" style="left:5px;top:24px;width:182px;height:160px;border-bottom:none;">
<div class="num" style="top:0px">7</div>
<div class="lb" style="top:0px;width:129px;letter-spacing:0.240px;">OT Fault</div>
<div class="clr" style="left:154px;top:4px">CLR</div>
<div class="hl" style="left:0;top:19px;width:180px"></div>
<div class="num" style="top:20px">6</div>
<div class="lb" style="top:20px;width:129px;letter-spacing:0.280px;">OT Warning</div>
<div class="clr" style="left:154px;top:24px">CLR</div>
<div class="hl" style="left:0;top:39px;width:180px"></div>
<div class="num" style="top:40px">5</div>
<div class="lg" style="top:40px;width:155px;">UT Fault</div>
<div class="hl" style="left:0;top:59px;width:180px"></div>
<div class="num" style="top:60px">4</div>
<div class="lg" style="top:60px;width:155px;">UT Warning</div>
<div class="hl" style="left:0;top:79px;width:180px"></div>
<div class="num" style="top:80px">3</div>
<div class="lg" style="top:80px;width:155px;">Reserved</div>
<div class="hl" style="left:0;top:99px;width:180px"></div>
<div class="num" style="top:100px">2</div>
<div class="lg" style="top:100px;width:155px;">Reserved</div>
<div class="hl" style="left:0;top:119px;width:180px"></div>
<div class="num" style="top:120px">1</div>
<div class="lg" style="top:120px;width:155px;">Reserved</div>
<div class="hl" style="left:0;top:139px;width:180px"></div>
<div class="num" style="top:140px">0</div>
<div class="lg" style="top:140px;width:155px;">Reserved</div>
<div class="vl" style="left:20px;top:0;height:160px"></div>
<div style="position:absolute;left:-1px;top:159px;width:22px;height:1px;background:#a0a0a0"></div>
</div>
</div>
<div class="pn" style="left:924px;top:593px;width:194px;height:191px">
<div class="ph" style="width:192px"></div>
<div class="pt" style="left:5px;top:3px;letter-spacing:0.211px">STATUS CML Phase 1</div>
<div class="hbox" style="left:158px;top:2px"></div>
<div class="clr pclr" style="left:160px;top:4px">CLR</div>
<div class="tb" style="left:5px;top:24px;width:182px;height:160px;border-bottom:none;">
<div class="num" style="top:0px">7</div>
<div class="lb" style="top:0px;width:129px;letter-spacing:0.360px;">Invalid Command</div>
<div class="clr" style="left:154px;top:4px">CLR</div>
<div class="hl" style="left:0;top:19px;width:180px"></div>
<div class="num" style="top:20px">6</div>
<div class="lb" style="top:20px;width:129px;letter-spacing:0.344px;">Invalid Data</div>
<div class="clr" style="left:154px;top:24px">CLR</div>
<div class="hl" style="left:0;top:39px;width:180px"></div>
<div class="num" style="top:40px">5</div>
<div class="lb" style="top:40px;width:129px;letter-spacing:0.210px;">PEC Fault</div>
<div class="clr" style="left:154px;top:44px">CLR</div>
<div class="hl" style="left:0;top:59px;width:180px"></div>
<div class="num" style="top:60px">4</div>
<div class="lb" style="top:60px;width:129px;letter-spacing:0.344px;">Memory Fault</div>
<div class="clr" style="left:154px;top:64px">CLR</div>
<div class="hl" style="left:0;top:79px;width:180px"></div>
<div class="num" style="top:80px">3</div>
<div class="lb" style="top:80px;width:129px;letter-spacing:0.360px;">Processor Fault</div>
<div class="clr" style="left:154px;top:84px">CLR</div>
<div class="hl" style="left:0;top:99px;width:180px"></div>
<div class="num" style="top:100px">2</div>
<div class="lg" style="top:100px;width:155px;">Reserved</div>
<div class="hl" style="left:0;top:119px;width:180px"></div>
<div class="num" style="top:120px">1</div>
<div class="lb" style="top:120px;width:129px;letter-spacing:0.315px;">Other Comms Fault</div>
<div class="clr" style="left:154px;top:124px">CLR</div>
<div class="hl" style="left:0;top:139px;width:180px"></div>
<div class="num" style="top:140px">0</div>
<div class="lb" style="top:140px;width:129px;letter-spacing:0.310px;">Other Memory/Logic Fault</div>
<div class="clr" style="left:154px;top:144px">CLR</div>
<div class="vl" style="left:20px;top:0;height:160px"></div>
<div style="position:absolute;left:-1px;top:159px;width:22px;height:1px;background:#a0a0a0"></div>
</div>
</div>
<div class="cl" style="left:216px;top:74px;width:11px;height:1px"></div>
<div class="cl" style="left:216px;top:14px;width:1px;height:61px"></div>
<div class="cl" style="left:200px;top:14px;width:17px;height:1px"></div>
<svg style="position:absolute;left:197px;top:11px" width="9" height="8" viewBox="0 0 9 8"><polygon points="0.2,3.5 8,0.3 8,6.7" fill="#000"/></svg>
<div class="cl" style="left:216px;top:95px;width:11px;height:1px"></div>
<div class="cl" style="left:216px;top:95px;width:1px;height:125px"></div>
<div class="cl" style="left:200px;top:219px;width:17px;height:1px"></div>
<svg style="position:absolute;left:197px;top:216px" width="9" height="8" viewBox="0 0 9 8"><polygon points="0.2,3.5 8,0.3 8,6.7" fill="#000"/></svg>
<div class="cl" style="left:217px;top:334px;width:10px;height:1px"></div>
<div class="cl" style="left:217px;top:334px;width:1px;height:116px"></div>
<div class="cl" style="left:200px;top:449px;width:18px;height:1px"></div>
<svg style="position:absolute;left:197px;top:446px" width="9" height="8" viewBox="0 0 9 8"><polygon points="0.2,3.5 8,0.3 8,6.7" fill="#000"/></svg>
<div class="cl" style="left:418px;top:115px;width:17px;height:1px"></div>
<div class="cl" style="left:434px;top:14px;width:1px;height:102px"></div>
<div class="cl" style="left:434px;top:14px;width:19px;height:1px"></div>
<svg style="position:absolute;left:450px;top:11px" width="9" height="8" viewBox="0 0 9 8"><polygon points="8.8,3.5 1,0.3 1,6.7" fill="#000"/></svg>
<div class="cl" style="left:418px;top:135px;width:28px;height:1px"></div>
<div class="cl" style="left:445px;top:135px;width:1px;height:85px"></div>
<div class="cl" style="left:445px;top:219px;width:8px;height:1px"></div>
<svg style="position:absolute;left:450px;top:216px" width="9" height="8" viewBox="0 0 9 8"><polygon points="8.8,3.5 1,0.3 1,6.7" fill="#000"/></svg>
<div class="cl" style="left:418px;top:193px;width:21px;height:1px"></div>
<div class="cl" style="left:438px;top:193px;width:1px;height:244px"></div>
<div class="cl" style="left:438px;top:436px;width:15px;height:1px"></div>
<svg style="position:absolute;left:450px;top:433px" width="9" height="8" viewBox="0 0 9 8"><polygon points="8.8,3.5 1,0.3 1,6.7" fill="#000"/></svg>
<div class="cl" style="left:418px;top:355px;width:5px;height:1px"></div>
<div class="cl" style="left:422px;top:355px;width:1px;height:82px"></div>
<div class="cl" style="left:414px;top:436px;width:9px;height:1px"></div>
<svg style="position:absolute;left:411px;top:433px" width="9" height="8" viewBox="0 0 9 8"><polygon points="0.2,3.5 8,0.3 8,6.7" fill="#000"/></svg>
</div>
<div style="left:1389px;top:96px;width:18px;height:779px;background:linear-gradient(90deg,#e6e6e6 0px,#f4f3ef 2px,#f7f6f2 100%)"></div>
<div style="left:1389px;top:98px;width:17px;height:17px;border:1px solid #777;border-radius:3px;background:linear-gradient(90deg,#f8f8f8,#e6e6e6)"></div>
<svg style="position:absolute;left:1392px;top:101px" width="11" height="11" viewBox="0 0 11 11"><path d="M2 7.5L5.5 4 9 7.5" stroke="#444" stroke-width="1.3" fill="none"/></svg>
<div style="left:1389px;top:116px;width:17px;height:570px;border:1px solid #777;border-radius:3px;background:linear-gradient(90deg,#f8f8f8,#e4e4e4)"></div>
<div style="left:1394px;top:398px;width:7px;height:1px;background:#666"></div>
<div style="left:1394px;top:400px;width:7px;height:1px;background:#666"></div>
<div style="left:1394px;top:402px;width:7px;height:1px;background:#666"></div>
<div style="left:1389px;top:858px;width:17px;height:17px;border:1px solid #777;border-radius:3px;background:linear-gradient(90deg,#f8f8f8,#e6e6e6)"></div>
<svg style="position:absolute;left:1392px;top:861px" width="11" height="11" viewBox="0 0 11 11"><path d="M2 3.5L5.5 7 9 3.5" stroke="#444" stroke-width="1.3" fill="none"/></svg>
<div style="left:166px;top:875px;width:1223px;height:17px;background:linear-gradient(#e6e6e6 0px,#f4f3ef 2px,#f7f6f2 100%)"></div>
<div style="left:167px;top:875px;width:17px;height:17px;border:1px solid #777;border-radius:3px;background:linear-gradient(#f8f8f8,#e6e6e6)"></div>
<svg style="position:absolute;left:170px;top:878px" width="11" height="11" viewBox="0 0 11 11"><path d="M7 2L3.5 5.5 7 9" stroke="#444" stroke-width="1.3" fill="none"/></svg>
<div style="left:185px;top:875px;width:828px;height:17px;border:1px solid #777;border-radius:3px;background:linear-gradient(#f8f8f8,#e4e4e4)"></div>
<div style="left:596px;top:880px;width:1px;height:7px;background:#777"></div>
<div style="left:598px;top:880px;width:1px;height:7px;background:#777"></div>
<div style="left:600px;top:880px;width:1px;height:7px;background:#777"></div>
<div style="left:1372px;top:875px;width:17px;height:17px;border:1px solid #777;border-radius:3px;background:linear-gradient(#f8f8f8,#e6e6e6)"></div>
<svg style="position:absolute;left:1375px;top:878px" width="11" height="11" viewBox="0 0 11 11"><path d="M4 2L7.5 5.5 4 9" stroke="#444" stroke-width="1.3" fill="none"/></svg>
<div style="left:169px;top:908px;width:1236px;height:79px;border:1px solid #8a94a6;background:#fff"></div>
<div style="left:173px;top:912px;width:1228px;height:74px;border:3px solid #efefef;border-right:none;background:#fff"></div>
<div style="left:1383px;top:915px;width:17px;height:17px;border:1px solid #c8c8c8;border-radius:3px;background:#f6f6f6"></div>
<svg style="position:absolute;left:1386px;top:918px" width="11" height="11" viewBox="0 0 11 11"><path d="M2 7.5L5.5 4 9 7.5" stroke="#aaa" stroke-width="1.3" fill="none"/></svg>
<div style="left:1383px;top:932px;width:17px;height:34px;background:linear-gradient(90deg,#f0f0f0,#f8f8f8)"></div>
<div style="left:1383px;top:966px;width:17px;height:17px;border:1px solid #c8c8c8;border-radius:3px;background:#f6f6f6"></div>
<svg style="position:absolute;left:1386px;top:969px" width="11" height="11" viewBox="0 0 11 11"><path d="M2 3.5L5.5 7 9 3.5" stroke="#aaa" stroke-width="1.3" fill="none"/></svg>
<div style="left:169px;top:987px;width:70px;height:21px;border-left:1px solid #8a94a6;border-right:1px solid #8a94a6;background:#fff"></div>
<div class="t" style="left:178px;top:992px;font-size:9.5px;letter-spacing:0.399px;line-height:12px">PMBus Log</div>
<svg style="position:absolute;left:1383px;top:990px" width="17" height="18" viewBox="0 0 17 18"><path d="M15.5 1V16.5H0.5" stroke="#a8a8a8" stroke-width="1" fill="none"/><path d="M2.3 6.5L2.8 14.2Q3.3 16.3 8 16.3Q12.7 16.3 13.2 14.2L13.7 6.5Z" fill="#d4d2bc" stroke="#111" stroke-width="1.1"/><path d="M5.3 9v6M8 9.3v6.3M10.7 9v6" stroke="#4a4a40" stroke-width="0.9"/><ellipse cx="8" cy="4.6" rx="6.6" ry="3.5" fill="#e6e4cf" stroke="#000" stroke-width="1.1"/><ellipse cx="7.6" cy="3.4" rx="1.7" ry="0.9" fill="#222"/></svg>
<div style="left:4px;top:1013px;width:1408px;height:23px;background:linear-gradient(#f2f2f2,#e4e4e4);border:1px solid #5f5b52;box-shadow:inset 1px 1px 0 #fff"></div>
<div style="left:6px;top:1015px;width:215px;height:19px;border:1px solid #a0a0a0;box-shadow:1px 1px 0 #fff;background:linear-gradient(#f0f0f0,#e6e6e6)"></div>
<div class="t" style="left:12px;top:1019px;font-size:9.5px;letter-spacing:0.458px;line-height:12px">Fusion Digital Power Designer v7.1.28.Beta</div>
<div style="left:221px;top:1015px;width:212px;height:19px;border:1px solid #a0a0a0;box-shadow:1px 1px 0 #fff;background:linear-gradient(#f0f0f0,#e6e6e6)"></div>
<div class="t" style="left:227px;top:1019px;font-size:9.5px;letter-spacing:0.476px;line-height:12px">TPS546D24A @ PMBus Address 36d (24h)</div>
<div style="left:433px;top:1015px;width:70px;height:19px;border:1px solid #a0a0a0;box-shadow:1px 1px 0 #fff;background:linear-gradient(#f0f0f0,#e6e6e6)"></div>
<div class="t" style="left:441px;top:1019px;font-size:9.5px;letter-spacing:0.400px;line-height:12px">* Not Saved</div>
</body></html>
